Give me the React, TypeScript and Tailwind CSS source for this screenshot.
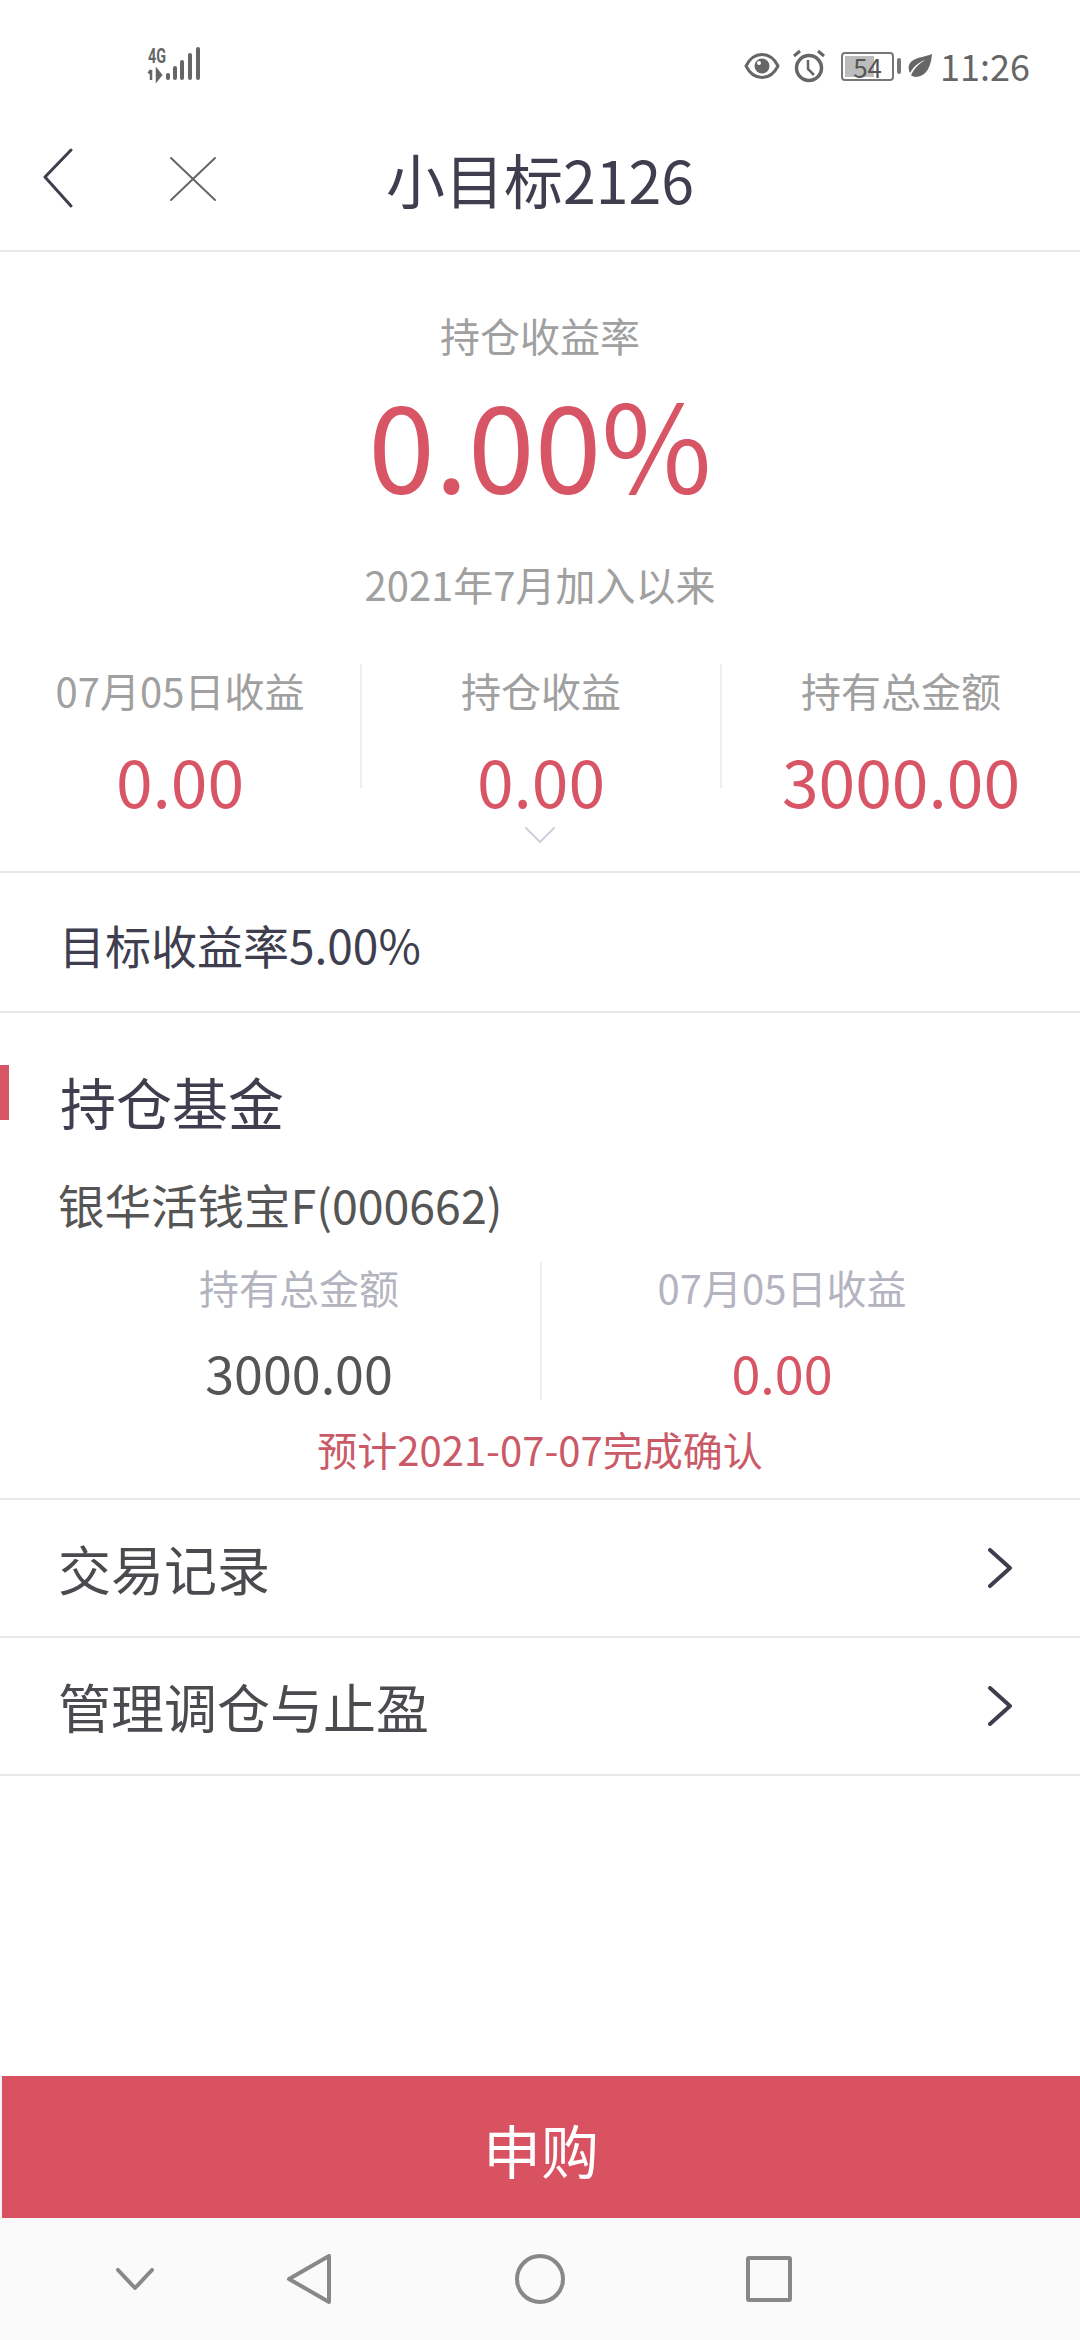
function SignalIcon() {
  return (
    <svg width="60" height="40" viewBox="0 0 60 40" className="ml-[146px] overflow-visible">
      <text x="2" y="17" fontSize="20" fontWeight="700" fill="#666" fontFamily="Roboto, sans-serif" textLength="18" lengthAdjust="spacingAndGlyphs">4G</text>
      <path d="M5 24v10M2.500 27.500 5 24M11 24v10l4-5z" stroke="#666" strokeWidth="2.500" fill="#666" />
      <rect x="20" y="27" width="4" height="7" rx="2" fill="#666" />
      <rect x="27" y="20" width="4" height="14" rx="2" fill="#666" />
      <rect x="34" y="14" width="4" height="20" rx="2" fill="#666" />
      <rect x="42" y="7" width="4" height="27" rx="2" fill="#666" />
      <rect x="50" y="1" width="4" height="33" rx="2" fill="#666" />
    </svg>
  );
}

function EyeIcon() {
  return (
    <svg width="36" height="28" viewBox="0 0 36 28">
      <path d="M2 14C6 6 11 2.500 18 2.500S30 6 34 14c-4 8-9 11.500-16 11.500S6 22 2 14z" fill="none" stroke="#666" strokeWidth="3" strokeLinejoin="round" />
      <circle cx="18" cy="14" r="7.500" fill="#666" />
      <circle cx="15" cy="11" r="2" fill="#fff" />
    </svg>
  );
}

function AlarmIcon() {
  return (
    <svg width="34" height="34" viewBox="0 0 34 34">
      <circle cx="17" cy="19" r="12.500" fill="none" stroke="#666" strokeWidth="3.500" />
      <path d="M16 11v9l6 6" fill="none" stroke="#666" strokeWidth="2.500" />
      <path d="M2 7 8 2M32 7 26 2" stroke="#666" strokeWidth="3" />
    </svg>
  );
}

function LeafIcon() {
  return (
    <svg width="24" height="24" viewBox="0 0 24 24">
      <path d="M24 0C23 12 19 22 8 23c-2 0-4-1-5-2C7 13 12 9 17 6 11 8 6 12 2 19 0 15 0 10 4 7 9 3 17 3 24 0z" fill="#666" />
    </svg>
  );
}

function Chevron({ d, w, h, color = '#3e3e4e', sw = 3 }: { d: string; w: number; h: number; color?: string; sw?: number }) {
  return (
    <svg width={w} height={h} viewBox={`0 0 ${w} ${h}`} className="block">
      <path d={d} fill="none" stroke={color} strokeWidth={sw} strokeLinecap="round" strokeLinejoin="round" />
    </svg>
  );
}

function Stat({ label, value }: { label: string; value: string }) {
  return (
    <div className="flex flex-col items-center">
      <span className="mt-[2px] text-[40px] leading-[48px] text-[#a0a0a0] whitespace-nowrap">{label}</span>
      <span className="mt-[23px] text-[66px] leading-[84px] text-[#d85565]">{value}</span>
    </div>
  );
}

function Row({ label }: { label: string }) {
  return (
    <div className="flex h-[138px] items-center justify-between border-b-2 border-[#e8e8e8] pl-[58px] pr-[68px]">
      <span className="text-[53px] leading-[60px] text-[#4a4a4f]">{label}</span>
      <Chevron d="M2 2 L22 20 L2 38" w={24} h={40} sw={4} />
    </div>
  );
}

export default function App() {
  return (
    <div
      className="flex h-[2340px] w-[1080px] flex-col overflow-hidden bg-white"
      style={{ fontFamily: '"Noto Sans CJK SC", sans-serif' }}
    >
      {/* status bar */}
      <div className="flex h-[100px] items-center justify-between pt-[32px] pr-[50px]">
        <SignalIcon />
        <div className="flex items-center">
          <EyeIcon />
          <div className="ml-[12px]"><AlarmIcon /></div>
          <div className="ml-[15px] relative flex h-[29px] w-[53px] items-center justify-center rounded-[4px] border-2 border-[#777]">
            <div className="absolute left-[2px] top-[2px] bottom-[2px] w-[29px] bg-[#bcbcbc]" />
            <span className="relative text-[26px] leading-[25px] text-[#555]">54</span>
          </div>
          <div className="ml-[3px] h-[16px] w-[4px] rounded-[2px] bg-[#777]" />
          <div className="ml-[7px]"><LeafIcon /></div>
          <span className="ml-[8px] mt-[-2px] text-[36px] leading-[40px] text-[#666]">11:26</span>
        </div>
      </div>

      {/* nav */}
      <div className="relative flex h-[152px] items-center justify-center border-b-2 border-[#e8e8e8] pt-[8px]">
        <div className="absolute left-[42px] top-[48px] flex items-start">
          <Chevron d="M29 2 L3 29 L29 58" w={32} h={60} />
          <div className="ml-[95px] mt-[8px]">
            <Chevron d="M2 2 L46 44 M46 2 L2 44" w={48} h={46} color="#666" sw={2} />
          </div>
        </div>
        <span className="text-[59px] leading-[70px] text-[#3e3e4e]">小目标2126</span>
      </div>

      {/* summary */}
      <div className="relative flex h-[621px] flex-col items-center border-b-2 border-[#e8e8e8] pt-[59px]">
        <span className="text-[40px] leading-[48px] text-[#a0a0a0]">持仓收益率</span>
        <span className="mt-[7px] text-[120px] leading-[150px] text-[#d85565]">0.00%</span>
        <span className="mt-[44px] text-[40px] leading-[48px] text-[#a0a0a0]">2021年7月加入以来</span>
        <div className="mt-[56px] grid w-full grid-cols-3">
          <div className="h-[124px]"><Stat label="07月05日收益" value="0.00" /></div>
          <div className="h-[124px] border-l-2 border-[#eeeeee]"><Stat label="持仓收益" value="0.00" /></div>
          <div className="h-[124px] border-l-2 border-[#eeeeee]"><Stat label="持有总金额" value="3000.00" /></div>
        </div>
        <div className="mt-[38px]">
          <Chevron d="M2 2 L16 16 L30 2" w={32} h={18} color="#ccd0dc" sw={2} />
        </div>
      </div>

      {/* target */}
      <div className="flex h-[140px] items-center border-b-2 border-[#e8e8e8] pl-[59px] pt-[4px]">
        <span className="text-[46px] leading-[56px] text-[#3e3e4e]">目标收益率5.00%</span>
      </div>

      {/* holdings */}
      <div className="relative flex h-[487px] flex-col border-b-2 border-[#e8e8e8] pt-[54px]">
        <div className="absolute left-0 top-[52px] h-[55px] w-[9px] bg-[#d85565]" />
        <span className="pl-[60px] text-[56px] leading-[68px] text-[#3e3e4e]">持仓基金</span>
        <span className="mt-[42px] pl-[58px] text-[46.500px] leading-[54px] text-[#555555]">银华活钱宝F(000662)</span>
        <div className="mt-[31px] grid grid-cols-[542px_480px]">
          <div className="flex h-[138px] flex-col items-center border-r-2 border-[#eeeeee] pl-[58px] pt-[1px]">
            <span className="text-[40px] leading-[48px] text-[#b4b4c0]">持有总金额</span>
            <span className="mt-[30px] text-[52px] leading-[62px] text-[#555555]">3000.00</span>
          </div>
          <div className="flex h-[138px] flex-col items-center pt-[1px]">
            <span className="text-[40px] leading-[48px] text-[#b4b4c0]">07月05日收益</span>
            <span className="mt-[30px] text-[52px] leading-[62px] text-[#d85565]">0.00</span>
          </div>
        </div>
        <span className="mt-[25px] text-center text-[40px] leading-[48px] text-[#cb5a68]">预计2021-07-07完成确认</span>
      </div>

      <Row label="交易记录" />
      <Row label="管理调仓与止盈" />

      {/* buy button */}
      <div className="mt-auto flex h-[142px] items-center justify-center border-l-2 border-[#f5f5f5] bg-[#d85262] pt-[4px]">
        <span className="text-[58px] leading-[70px] text-white">申购</span>
      </div>

      {/* system nav */}
      <div className="flex h-[122px] items-center bg-[#fafafa]">
        <div className="ml-[116px]"><Chevron d="M2 2 L19 20 L36 2" w={38} h={22} color="#888" sw={4} /></div>
        <div className="ml-[133px]"><Chevron d="M42 2 V48 L2 25 Z" w={44} h={50} color="#888" sw={4} /></div>
        <div className="ml-[184px]"><div className="h-[50px] w-[50px] rounded-full border-[4px] border-[#888]" /></div>
        <div className="ml-[181px]"><div className="h-[46px] w-[46px] rounded-[3px] border-[4px] border-[#888]" /></div>
      </div>
    </div>
  );
}
